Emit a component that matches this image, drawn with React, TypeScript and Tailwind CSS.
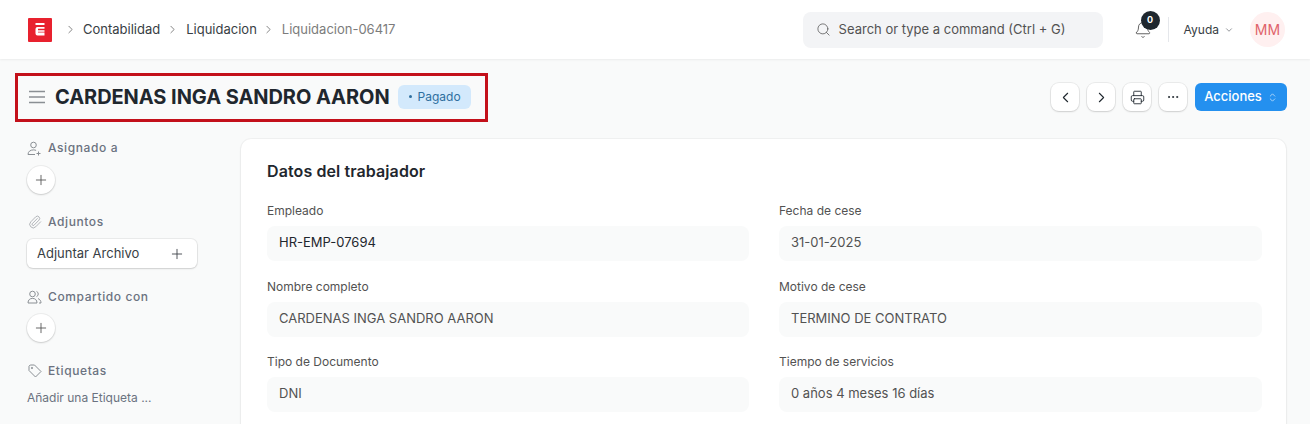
import React from 'react';
import {
  Bell,
  ChevronDown,
  ChevronLeft,
  ChevronRight,
  ChevronsUpDown,
  Ellipsis,
  Paperclip,
  Plus,
  Printer,
  Search,
} from 'lucide-react';

const fields = [
  ['Empleado', 'HR-EMP-07694', 'Fecha de cese', '31-01-2025'],
  ['Nombre completo', 'CARDENAS INGA SANDRO AARON', 'Motivo de cese', 'TERMINO DE CONTRATO'],
  ['Tipo de Documento', 'DNI', 'Tiempo de servicios', '0 años 4 meses 16 días'],
];

const Field: React.FC<{ label: string; value: string; dark?: boolean }> = ({ label, value, dark }) => (
  <div>
    <div className="h-[16px] text-[12px] leading-[16px] text-[#525252]">{label}</div>
    <div
      className={`mt-[7px] flex h-[35px] items-center rounded-[8px] bg-[#f9fafa] px-3 pb-[1px] text-[13px] ${
        dark ? 'text-[#1f272e]' : 'text-[#525252]'
      }`}
    >
      {value}
    </div>
  </div>
);

const IconButton: React.FC<{ children: React.ReactNode }> = ({ children }) => (
  <button className="flex h-[28px] w-[28px] items-center justify-center rounded-[8px] bg-white text-[#1f272e] shadow-[0_0_0_1px_rgba(0,0,0,0.06),0_1px_2px_rgba(0,0,0,0.12)]">
    {children}
  </button>
);

const CircleAdd: React.FC = () => (
  <div className="flex h-[29px] items-center">
    <button className="flex h-[28px] w-[28px] items-center justify-center rounded-full bg-white text-[#525252] shadow-[0_0_0_1px_rgba(0,0,0,0.05),0_1px_2px_rgba(0,0,0,0.15)]">
      <Plus size={16} strokeWidth={1.3} />
    </button>
  </div>
);

const SideTitle: React.FC<{ icon: React.ReactNode; children: React.ReactNode }> = ({ icon, children }) => (
  <div className="flex h-[18px] items-center gap-[6px] text-[12px] font-medium tracking-[0.6px] text-[#6b7280]">
    <span className="flex w-[15px] justify-center text-[#8a8f94]">{icon}</span>
    {children}
  </div>
);

const AssignIcon = () => (
  <svg width="15" height="15" viewBox="0 0 15 15" fill="none" stroke="currentColor" strokeWidth="1">
    <circle cx="6.5" cy="4" r="2.8" />
    <path d="M1 13.5c0-3 2.4-4.6 5.5-4.6 1 0 1.9.2 2.6.5M1 13.5h7M11.5 10.5v4M9.5 12.5h4" />
  </svg>
);

const SharedIcon = () => (
  <svg width="15" height="14" viewBox="0 0 15 14" fill="none" stroke="currentColor" strokeWidth="1">
    <circle cx="5.5" cy="4" r="2.8" />
    <path d="M1 13c0-3 1.8-4.6 4.5-4.6S10 10 10 13zM9.5 1.4a2.8 2.8 0 0 1 0 5.2M11 8.6c1.8.6 3 2.2 3 4.4h-2" />
  </svg>
);

const TagIcon = () => (
  <svg width="14" height="14" viewBox="0 0 14 14" fill="none" stroke="currentColor" strokeWidth="1">
    <path d="M1 2.2 2.2 1h4.300l6.500 6.500-5.500 5.500L1 6.500z" />
    <circle cx="4" cy="4" r="0.7" />
  </svg>
);

export default function App() {
  return (
    <div className="h-[424px] w-[1310px] overflow-hidden bg-[#f9fafa] font-['Inter',sans-serif] text-[#1f272e]">
      <header className="flex h-[59px] items-center justify-between bg-white pl-[28px] pr-[25px] shadow-[0_1px_2px_rgba(0,0,0,0.06)]">
        <div className="flex items-center">
          <svg width="24" height="24" viewBox="0 0 24 24" className="shrink-0">
            <rect width="24" height="24" rx="1" fill="#e8212e" />
            <path d="M7.500 5h9v2h-9zM9.500 9h7v1.800h-6.500v1.400h6.500v1.600h-6.500v.8h6.500V17.500H9.500a2 2 0 0 1-2-2V11a2 2 0 0 1 2-2z" fill="#fff" />
          </svg>
          <ChevronRight size={13} strokeWidth={1.3} className="ml-[12px] text-[#525252]" />
          <span className="ml-[6px] text-[13px] text-[#383e44]">Contabilidad</span>
          <ChevronRight size={13} strokeWidth={1.3} className="ml-[6px] text-[#525252]" />
          <span className="ml-[7px] text-[13px] text-[#383e44]">Liquidacion</span>
          <ChevronRight size={13} strokeWidth={1.3} className="ml-[5px] text-[#525252]" />
          <span className="ml-[7px] text-[13px] text-[#7c7c7c]">Liquidacion-06417</span>
        </div>
        <div className="flex items-center">
          <div className="flex h-[36px] w-[300px] items-center gap-[8px] rounded-[8px] bg-[#f3f4f6] pl-[13px] text-[13px] text-[#525252]">
            <Search size={15} strokeWidth={1.2} />
            Search or type a command (Ctrl + G)
          </div>
          <div className="relative ml-[31px] text-[#525252]">
            <Bell size={18} strokeWidth={1.2} />
            <span className="absolute -right-[8px] -top-[10px] flex h-[19px] w-[19px] items-center justify-center rounded-full bg-[#1f272e] text-[9px] font-bold text-white">
              0
            </span>
          </div>
          <div className="ml-[16px] h-[25px] w-px bg-[#e5e7eb]" />
          <div className="ml-[15px] flex items-center gap-[5px] text-[12px] text-[#383e44]">
            Ayuda
            <ChevronDown size={10} strokeWidth={1.3} />
          </div>
          <div className="ml-[16px] flex h-[35px] w-[35px] items-center justify-center rounded-full bg-[#fff0f0] text-[14px] text-[#e0636b]">
            MM
          </div>
        </div>
      </header>

      <div className="flex items-center justify-between pl-[15px] pr-[23px] pt-[14px]">
        <div className="flex h-[49px] w-[473px] items-center border-[3px] border-[#c3101a] pb-[2px] pl-[11px]">
          <svg width="16" height="14" viewBox="0 0 16 14" fill="none" stroke="#8a8f94" strokeWidth="1.3">
            <path d="M0 1.500h16M0 7h16M0 12.500h16" />
          </svg>
          <h1 className="ml-[10px] text-[20px] font-bold leading-none tracking-[-0.06px] text-[#1f272e]">
            CARDENAS INGA SANDRO AARON
          </h1>
          <span className="ml-[8px] flex h-[24px] w-[73px] items-center gap-[6px] rounded-[6px] bg-[#d3e9fc] pl-[11px] text-[12px] text-[#2f6f9f]">
            <span className="h-[3px] w-[3px] rounded-full bg-[#2f6f9f]" />
            Pagado
          </span>
        </div>
        <div className="-mt-[1px] flex items-center gap-[8px]">
          <IconButton>
            <ChevronLeft size={17} strokeWidth={1.5} />
          </IconButton>
          <IconButton>
            <ChevronRight size={17} strokeWidth={1.5} />
          </IconButton>
          <IconButton>
            <Printer size={15} strokeWidth={1.4} />
          </IconButton>
          <IconButton>
            <Ellipsis size={14} strokeWidth={1.6} />
          </IconButton>
          <button className="flex h-[28px] w-[92px] items-center justify-center gap-[5px] rounded-[6px] bg-[#2490ef] text-[13px] font-medium text-white">
            Acciones
            <ChevronsUpDown size={11} strokeWidth={1.3} />
          </button>
        </div>
      </div>

      <div className="flex pl-[27px] pt-[17px]">
        <aside className="w-[214px] shrink-0">
          <SideTitle icon={<AssignIcon />}>Asignado a</SideTitle>
          <div className="mt-[8px]">
            <CircleAdd />
          </div>
          <div className="mt-[19px]">
            <SideTitle icon={<Paperclip size={14} strokeWidth={1.1} />}>Adjuntos</SideTitle>
          </div>
          <button className="mt-[8px] flex h-[29px] w-[170px] items-center justify-between rounded-[6px] bg-white pl-[10px] pr-[12px] text-[13px] text-[#383e44] shadow-[0_0_0_1px_rgba(0,0,0,0.06),0_1px_2px_rgba(0,0,0,0.12)]">
            Adjuntar Archivo
            <Plus size={16} strokeWidth={1.3} />
          </button>
          <div className="mt-[20px]">
            <SideTitle icon={<SharedIcon />}>Compartido con</SideTitle>
          </div>
          <div className="mt-[7px]">
            <CircleAdd />
          </div>
          <div className="mt-[20px]">
            <SideTitle icon={<TagIcon />}>Etiquetas</SideTitle>
          </div>
          <div className="mt-[9px] text-[12px] text-[#6b7280]">Añadir una Etiqueta ...</div>
        </aside>

        <main className="h-[320px] w-[1045px] rounded-t-[10px] bg-white pl-[26px] pr-[24px] pt-[22px] shadow-[0_0_0_1px_rgba(0,0,0,0.03),0_1px_3px_rgba(0,0,0,0.06)]">
          <h2 className="h-[20px] text-[16px] font-semibold leading-[20px] tracking-[0.1px] text-[#1f272e]">
            Datos del trabajador
          </h2>
          <div className="mt-[22px] flex flex-col gap-[17.5px]">
            {fields.map((row, i) => (
              <div key={row[0]} className="grid grid-cols-[482px_483px] justify-between">
                <Field label={row[0]} value={row[1]} dark={i === 0} />
                <Field label={row[2]} value={row[3]} />
              </div>
            ))}
          </div>
        </main>
      </div>
    </div>
  );
}
